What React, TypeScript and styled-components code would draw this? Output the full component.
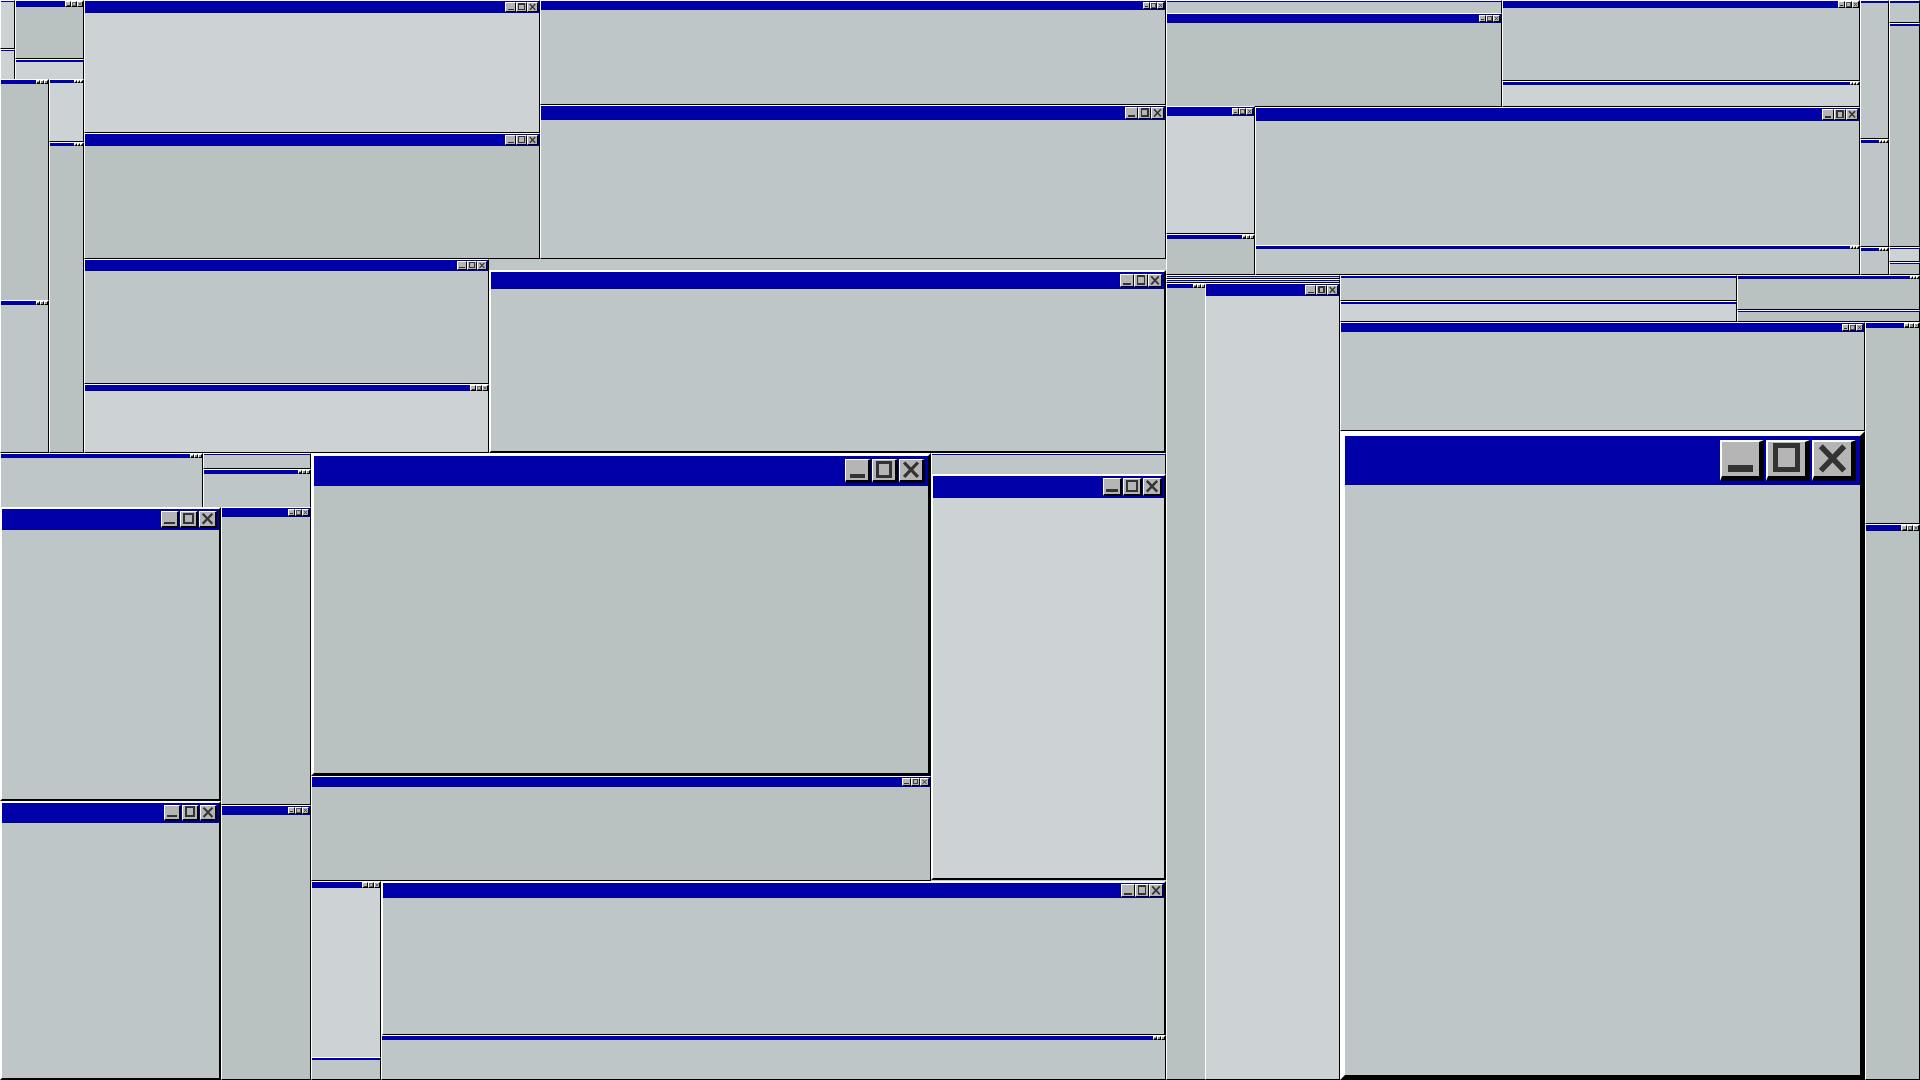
import React from 'react';
import styled, { createGlobalStyle } from 'styled-components';

type Tone = 'light' | 'mid' | 'dark';
type WinSpec = [number, number, number, number, number, Tone];
type IconKind = 'min' | 'max' | 'close';

const TONES: Record<Tone, string> = {
  light: '#cdd2d5',
  mid: '#bfc6c7',
  dark: '#b9c2c0',
};

const GlobalStyle = createGlobalStyle`
  html, body {
    margin: 0;
    padding: 0;
    width: 100%;
    height: 100%;
    overflow: hidden;
    background: #bfc6c7;
    font-family: "Liberation Sans", Arial, sans-serif;
  }
  #root { width: 100%; height: 100%; }
`;

const Desktop = styled.div`
  position: relative;
  width: 1920px;
  height: 1080px;
  overflow: hidden;
  background: #bfc6c7;
`;

const Frame = styled.div<{ $b: number; $tone: Tone }>`
  position: absolute;
  box-sizing: border-box;
  display: flex;
  flex-direction: column;
  overflow: hidden;
  border-style: solid;
  border-width: ${(p) => p.$b}px;
  border-color: #ffffff #000000 #000000 #ffffff;
  background: ${(p) => TONES[p.$tone]};
`;

const TitleBar = styled.div<{ $t: number; $pad: number; $gap: number }>`
  flex: 0 0 ${(p) => p.$t}px;
  height: ${(p) => p.$t}px;
  box-sizing: border-box;
  display: flex;
  justify-content: flex-end;
  align-items: center;
  gap: ${(p) => p.$gap}px;
  padding-right: ${(p) => p.$pad}px;
  background: #0000a8;
  overflow: hidden;
`;

const Body = styled.div<{ $tone: Tone }>`
  flex: 1 1 auto;
  min-height: 0;
  background: ${(p) => TONES[p.$tone]};
`;

const WinButton = styled.div<{ $w: number; $h: number; $hi: number; $sh: number }>`
  flex: 0 0 auto;
  box-sizing: border-box;
  width: ${(p) => p.$w}px;
  height: ${(p) => p.$h}px;
  background: #b5b5b5;
  border-style: solid;
  border-width: ${(p) => `${p.$hi}px ${p.$sh}px ${p.$sh}px ${p.$hi}px`};
  border-color: #ffffff #000000 #000000 #ffffff;
  display: flex;
  align-items: center;
  justify-content: center;
  overflow: hidden;

  svg {
    width: 100%;
    height: 100%;
    display: block;
  }
`;

const WINDOWS: WinSpec[] = [
  // top-left cluster
  [0, 0, 15, 49, 1, 'light'],
  [0, 49, 15, 31, 1, 'light'],
  [15, 0, 69, 59, 6, 'dark'],
  [15, 59, 69, 21, 2, 'light'],
  [0, 79, 49, 222, 4, 'dark'],
  [0, 300, 49, 153, 4, 'mid'],
  [49, 79, 35, 63, 3, 'light'],
  [49, 142, 35, 311, 3, 'dark'],
  // upper-left main column
  [84, 0, 456, 133, 12, 'light'],
  [84, 133, 456, 126, 12, 'dark'],
  [84, 259, 405, 125, 11, 'mid'],
  [84, 384, 405, 69, 6, 'light'],
  [540, 0, 626, 105, 9, 'mid'],
  [540, 105, 626, 154, 14, 'mid'],
  [489, 270, 677, 183, 17, 'mid'],
  // upper right
  [1166, 0, 336, 14, 1, 'mid'],
  [1166, 13, 336, 94, 9, 'dark'],
  [1502, 0, 358, 81, 7, 'mid'],
  [1502, 81, 358, 26, 3, 'light'],
  [1166, 106, 89, 128, 9, 'light'],
  [1166, 234, 89, 41, 4, 'dark'],
  [1255, 107, 605, 139, 13, 'mid'],
  [1255, 245, 605, 30, 3, 'mid'],
  [1860, 0, 29, 139, 2, 'mid'],
  [1889, 0, 31, 23, 2, 'mid'],
  [1889, 23, 31, 224, 2, 'dark'],
  [1860, 139, 29, 108, 3, 'mid'],
  [1860, 247, 29, 28, 3, 'mid'],
  [1889, 247, 31, 15, 1, 'light'],
  [1889, 262, 31, 13, 1, 'dark'],
  // middle-right band
  [1166, 275, 174, 4, 1, 'light'],
  [1166, 279, 174, 4, 1, 'light'],
  [1340, 275, 397, 26, 2, 'mid'],
  [1340, 301, 397, 21, 2, 'light'],
  [1737, 275, 183, 35, 3, 'dark'],
  [1737, 310, 183, 12, 1, 'dark'],
  [1166, 283, 40, 797, 4, 'dark'],
  [1205, 283, 135, 797, 12, 'light'],
  [1340, 322, 525, 109, 9, 'mid'],
  [1340, 431, 525, 649, 49, 'mid'],
  [1865, 322, 55, 202, 5, 'dark'],
  [1865, 524, 55, 556, 6, 'dark'],
  // lower left
  [0, 453, 203, 55, 4, 'mid'],
  [203, 453, 108, 16, 1, 'mid'],
  [203, 469, 108, 39, 4, 'mid'],
  [311, 453, 620, 323, 30, 'dark'],
  [931, 453, 235, 22, 1, 'mid'],
  [931, 474, 235, 406, 22, 'light'],
  [0, 507, 221, 294, 21, 'mid'],
  [0, 801, 221, 279, 20, 'mid'],
  [221, 507, 90, 298, 9, 'dark'],
  [221, 805, 90, 275, 9, 'dark'],
  [311, 776, 620, 105, 10, 'dark'],
  [311, 881, 70, 177, 6, 'light'],
  [311, 1057, 70, 23, 2, 'mid'],
  [381, 881, 785, 155, 15, 'mid'],
  [381, 1035, 785, 45, 4, 'mid'],
];

function metrics(t: number) {
  const b = Math.max(1, Math.round(t / 10));
  const pad = t >= 8 ? Math.max(1, Math.round(t * 0.09)) : 0;
  const bh = Math.max(1, t - pad * 2);
  const bw = Math.max(1, Math.round(bh * 1.07));
  const hi = Math.max(1, Math.round(bh / 20));
  const sh = Math.max(1, Math.round(bh / 9));
  const gap = t >= 20 ? Math.max(1, Math.round(t / 24)) : 0;
  return { b, pad, bh, bw, hi, sh, gap };
}

const Icon: React.FC<{ kind: IconKind }> = ({ kind }) => (
  <svg viewBox="0 0 16 16" preserveAspectRatio="xMidYMid meet">
    {kind === 'min' && (
      <rect x="2" y="11" width="12" height="3" fill="#333" shapeRendering="crispEdges" />
    )}
    {kind === 'max' && (
      <rect
        x="2.8"
        y="1.8"
        width="10.4"
        height="11"
        fill="none"
        stroke="#333"
        strokeWidth="2.4"
        shapeRendering="crispEdges"
      />
    )}
    {kind === 'close' && (
      <path d="M2.5 2 L13.5 13.5 M13.5 2 L2.5 13.5" stroke="#333" strokeWidth="2.6" fill="none" />
    )}
  </svg>
);

const KINDS: IconKind[] = ['min', 'max', 'close'];

const Window: React.FC<{ spec: WinSpec }> = ({ spec }) => {
  const [x, y, w, h, t, tone] = spec;
  const m = metrics(t);
  return (
    <Frame $b={m.b} $tone={tone} style={{ left: x, top: y, width: w, height: h }}>
      <TitleBar $t={t} $pad={m.pad} $gap={m.gap}>
        {t >= 3 &&
          KINDS.map((k) => (
            <WinButton key={k} $w={m.bw} $h={m.bh} $hi={m.hi} $sh={m.sh}>
              <Icon kind={k} />
            </WinButton>
          ))}
      </TitleBar>
      <Body $tone={tone} />
    </Frame>
  );
};

export default function App() {
  return (
    <>
      <GlobalStyle />
      <Desktop>
        {WINDOWS.map((spec, i) => (
          <Window key={i} spec={spec} />
        ))}
      </Desktop>
    </>
  );
}
